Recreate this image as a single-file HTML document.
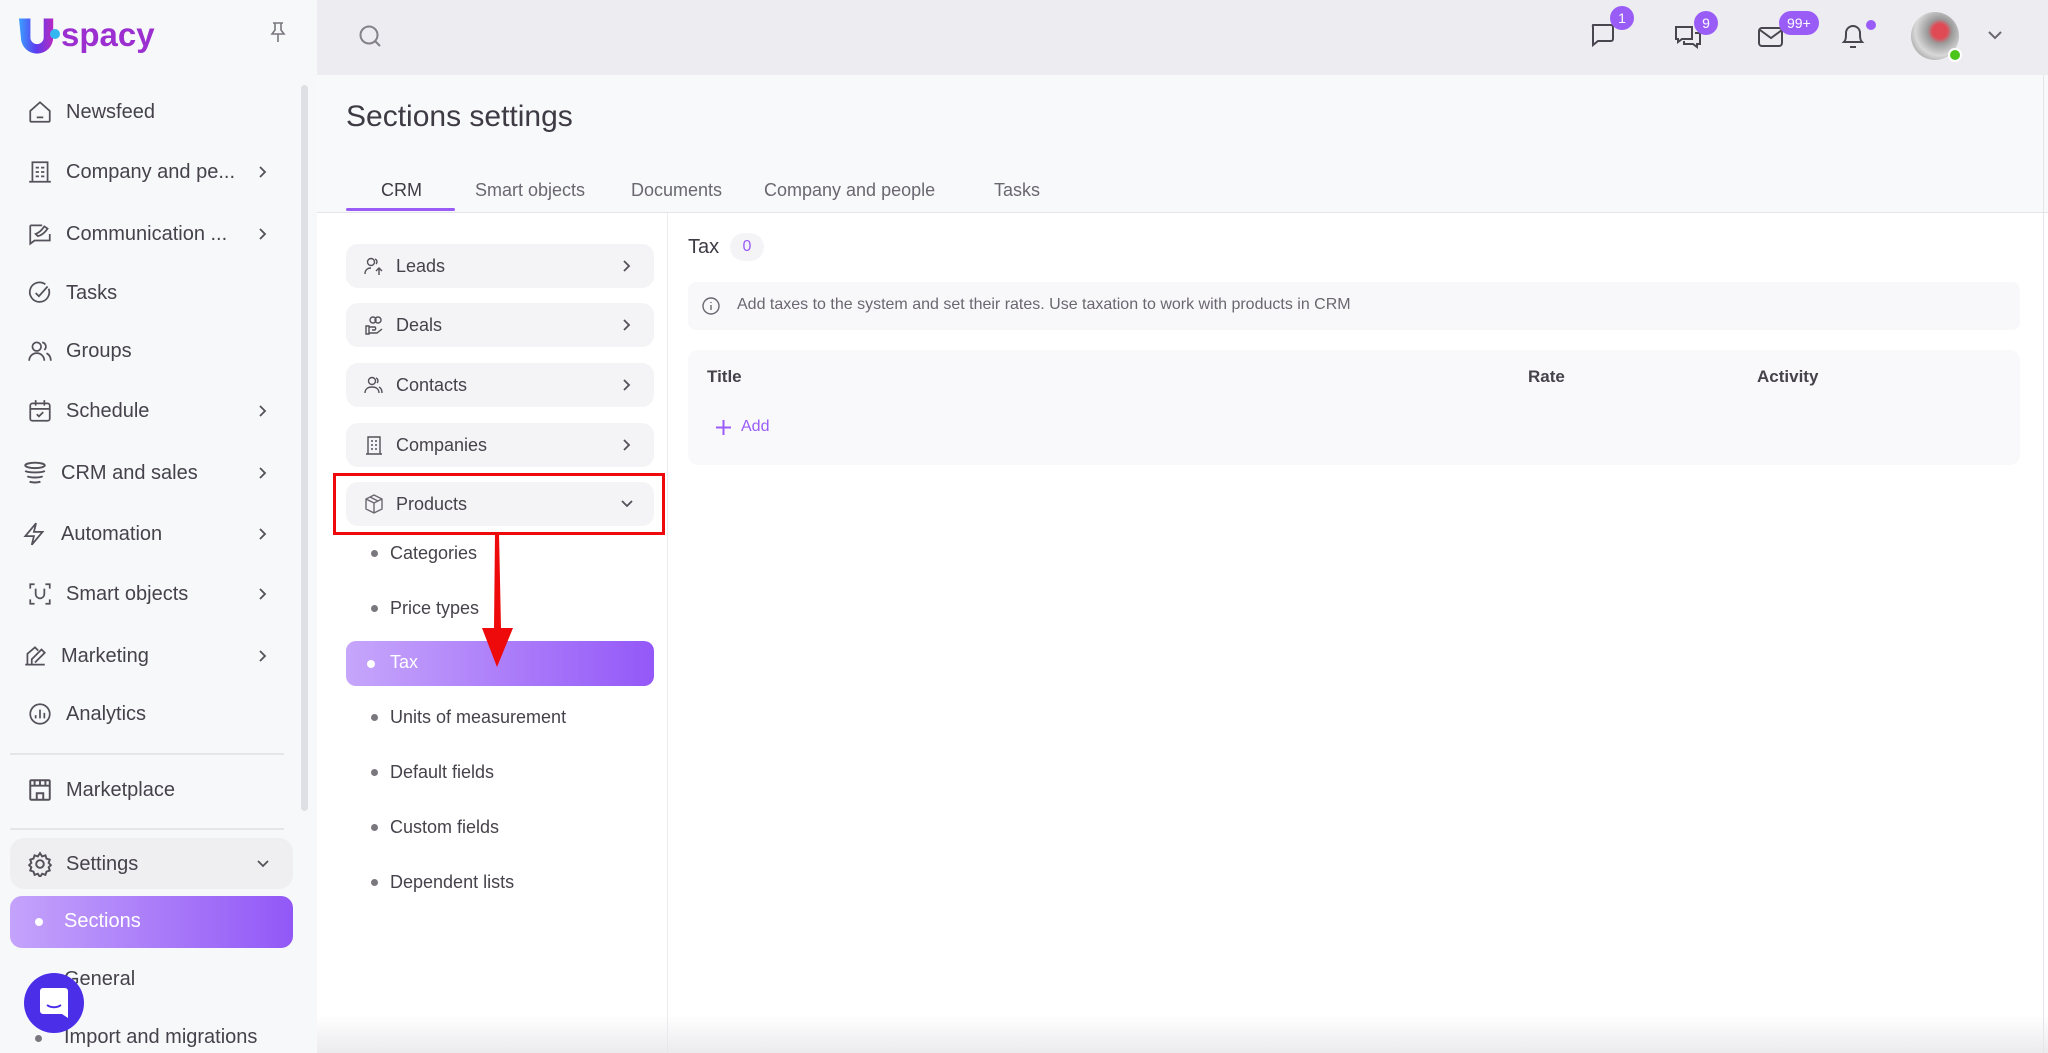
<!DOCTYPE html>
<html><head><meta charset="utf-8">
<style>
*{box-sizing:border-box;margin:0;padding:0}
body{width:2048px;height:1053px;overflow:hidden;background:#fff;font-family:"Liberation Sans",sans-serif;color:#3f3b45;position:relative}
.abs{position:absolute}
#side{left:0;top:0;width:317px;height:1053px;background:#f7f8fa}
.si{position:absolute;left:0;width:300px;height:40px;display:flex;align-items:center;font-size:20px;color:#46424b}
.si svg.ico{position:absolute;left:27px;width:26px;height:26px}
.si span{position:absolute;left:66px}
.si svg.chev{position:absolute;left:256px;width:14px;height:14px}
#top{left:317px;top:0;width:1731px;height:75px;background:#ececf1}
#main{left:317px;top:75px;width:1731px;height:138px;background:#f8f9fb}
.tab{position:absolute;top:180px;font-size:18px;color:#6b6770}
.lp{position:absolute;left:346px;width:308px;height:44px;background:#f4f4f6;border-radius:12px;font-size:18px;color:#46424b}
.lp svg.ic{position:absolute;left:18px;top:12px;width:20px;height:20px}
.lp span{position:absolute;left:50px;top:12px}
.lp svg.ch{position:absolute;right:20px;top:15px;width:14px;height:14px}
.sub{position:absolute;left:371px;font-size:18px;color:#46424b}
.sub:before{content:"";position:absolute;left:0;top:7px;width:7px;height:7px;border-radius:50%;background:#7b777f}
.sub span{margin-left:19px}
.bdg{position:absolute;background:#9a5cf7;color:#fff;font-size:14px;border-radius:12px;height:24px;min-width:24px;text-align:center;line-height:24px;padding:0 4px}
</style></head><body>
<div id="side" class="abs">
 <svg class="abs" style="left:19px;top:18px" width="38" height="37" viewBox="0 0 40 38"><defs><linearGradient id="lg" x1="0" x2="1"><stop offset="0" stop-color="#3aa0ff"/><stop offset=".5" stop-color="#5b3cf0"/><stop offset="1" stop-color="#b82ac0"/></linearGradient></defs><path d="M0 0h12v20a7 7 0 0 0 14 0V0h10v20a17 17 0 0 1-34 0z" fill="url(#lg)"/></svg>
 <div class="abs" style="left:50px;top:29px;width:10px;height:10px;border-radius:50%;background:#34b6f0"></div>
 <div class="abs" style="left:61px;top:16px;font-size:33px;font-weight:bold;color:#9b2fd0">spacy</div>
 <svg class="abs" style="left:268px;top:21px" width="20" height="22" viewBox="0 0 20 22" fill="none" stroke="#7a767e" stroke-width="1.6"><path d="M5 2h10M7 2v7l-3 4h12l-3-4V2M10 13v8"/></svg>
 <div class="abs" style="left:301px;top:85px;width:7px;height:726px;background:#dfe0e6;border-radius:4px"></div>

 <div class="si" style="top:92px"><svg class="ico" viewBox="0 0 24 24" fill="none" stroke="#55515a" stroke-width="1.6"><path d="M3 11l9-8 9 8v9a1 1 0 0 1-1 1H4a1 1 0 0 1-1-1z M9 17h6"/></svg><span>Newsfeed</span></div>
 <div class="si" style="top:152px"><svg class="ico" viewBox="0 0 24 24" fill="none" stroke="#55515a" stroke-width="1.6"><path d="M5 3h14v18H5zM2 21h20M8 8h3M13 8h3M8 12h3M13 12h3M8 16h3M13 16h3"/></svg><span>Company and pe...</span><svg class="chev" viewBox="0 0 14 14" fill="none" stroke="#55515a" stroke-width="1.8"><path d="M4 2l5 5-5 5"/></svg></div>
 <div class="si" style="top:214px"><svg class="ico" viewBox="0 0 24 24" fill="none" stroke="#55515a" stroke-width="1.6"><path d="M3 4h11M3 4v17l4-3h14v-6M8 12c3-1 6-4 8-7l3 2c-2 3-5 6-9 7z"/></svg><span>Communication ...</span><svg class="chev" viewBox="0 0 14 14" fill="none" stroke="#55515a" stroke-width="1.8"><path d="M4 2l5 5-5 5"/></svg></div>
 <div class="si" style="top:273px"><svg class="ico" viewBox="0 0 24 24" fill="none" stroke="#55515a" stroke-width="1.6"><path d="M20 8a9 9 0 1 1-3-4M8 12l3 3 8-9"/></svg><span>Tasks</span></div>
 <div class="si" style="top:331px"><svg class="ico" viewBox="0 0 24 24" fill="none" stroke="#55515a" stroke-width="1.6"><circle cx="9" cy="8" r="4"/><path d="M2 21c0-4 3-7 7-7s7 3 7 7M14 4a4 4 0 0 1 2 7M18 14c2 1 4 3 4 7"/></svg><span>Groups</span></div>
 <div class="si" style="top:391px"><svg class="ico" viewBox="0 0 24 24" fill="none" stroke="#55515a" stroke-width="1.6"><rect x="3" y="5" width="18" height="16" rx="2"/><path d="M3 10h18M8 2v5M16 2v5M9 15l2 2 4-4"/></svg><span>Schedule</span><svg class="chev" viewBox="0 0 14 14" fill="none" stroke="#55515a" stroke-width="1.8"><path d="M4 2l5 5-5 5"/></svg></div>
 <div class="si" style="top:453px"><svg class="ico" style="left:22px" viewBox="0 0 24 24" fill="none" stroke="#55515a" stroke-width="1.8"><ellipse cx="12" cy="5" rx="9" ry="2.5"/><path d="M3 10c2 2 16 2 18 0M5 15c2 1.5 12 1.5 14 0M7 20c2 1 8 1 10 0"/></svg><span style="left:61px">CRM and sales</span><svg class="chev" viewBox="0 0 14 14" fill="none" stroke="#55515a" stroke-width="1.8"><path d="M4 2l5 5-5 5"/></svg></div>
 <div class="si" style="top:514px"><svg class="ico" style="left:22px" viewBox="0 0 24 24" fill="none" stroke="#55515a" stroke-width="1.6"><path d="M13 2L3 14h8l-2 8 10-12h-8z"/></svg><span style="left:61px">Automation</span><svg class="chev" viewBox="0 0 14 14" fill="none" stroke="#55515a" stroke-width="1.8"><path d="M4 2l5 5-5 5"/></svg></div>
 <div class="si" style="top:574px"><svg class="ico" viewBox="0 0 24 24" fill="none" stroke="#55515a" stroke-width="1.6"><path d="M3 7V3h4M17 3h4v4M21 17v4h-4M7 21H3v-4M8 7v5a4 4 0 0 0 8 0V7"/></svg><span>Smart objects</span><svg class="chev" viewBox="0 0 14 14" fill="none" stroke="#55515a" stroke-width="1.8"><path d="M4 2l5 5-5 5"/></svg></div>
 <div class="si" style="top:636px"><svg class="ico" style="left:22px" viewBox="0 0 24 24" fill="none" stroke="#55515a" stroke-width="1.6"><path d="M3 20h18M5 20V10l7-6 3 3M9 20v-5l9-9 3 3-9 9"/></svg><span style="left:61px">Marketing</span><svg class="chev" viewBox="0 0 14 14" fill="none" stroke="#55515a" stroke-width="1.8"><path d="M4 2l5 5-5 5"/></svg></div>
 <div class="si" style="top:694px"><svg class="ico" viewBox="0 0 24 24" fill="none" stroke="#55515a" stroke-width="1.6"><circle cx="12" cy="12" r="9"/><path d="M8 16v-3M12 16V8M16 16v-5"/></svg><span>Analytics</span></div>
 <div class="abs" style="left:10px;top:753px;width:274px;height:2px;background:#e6e6ea"></div>
 <div class="si" style="top:770px"><svg class="ico" viewBox="0 0 24 24" fill="none" stroke="#55515a" stroke-width="1.8"><rect x="3" y="3" width="18" height="18" rx="1"/><path d="M3 8h18M7 3v5M12 3v5M17 3v5M9 21v-6h6v6"/></svg><span>Marketplace</span></div>
 <div class="abs" style="left:10px;top:828px;width:274px;height:2px;background:#e6e6ea"></div>
 <div class="abs" style="left:10px;top:838px;width:283px;height:51px;background:#efeff2;border-radius:14px"></div>
 <div class="si" style="top:844px"><svg class="ico" viewBox="0 0 24 24" fill="none" stroke="#55515a" stroke-width="1.8"><circle cx="12" cy="12" r="3.5"/><path d="M12 2l2 3 3-1 1 3 3 1-1 3 2 2-2 2 1 3-3 1-1 3-3-1-2 3-2-3-3 1-1-3-3-1 1-3-2-2 2-2-1-3 3-1 1-3 3 1z"/></svg><span>Settings</span><svg class="chev" viewBox="0 0 14 14" fill="none" stroke="#55515a" stroke-width="1.8"><path d="M2 4l5 5 5-5"/></svg></div>
 <div class="abs" style="left:10px;top:896px;width:283px;height:52px;border-radius:12px;background:linear-gradient(90deg,#c4a3fb,#9258f7)"></div>
 <div class="abs" style="left:35px;top:918px;width:8px;height:8px;border-radius:50%;background:#fff"></div>
 <div class="abs" style="left:64px;top:910px;font-size:20px;color:#fff">Sections</div>
 <div class="abs" style="left:64px;top:968px;font-size:20px;color:#46424b">General</div>
 <div class="abs" style="left:35px;top:1035px;width:7px;height:7px;border-radius:50%;background:#7b777f"></div>
 <div class="abs" style="left:64px;top:1026px;font-size:20px;color:#46424b">Import and migrations</div>
 <div class="abs" style="left:24px;top:973px;width:60px;height:60px;border-radius:50%;background:#4a2ee8"></div>
 <svg class="abs" style="left:40px;top:988px" width="28" height="30" viewBox="0 0 28 30"><path d="M3 0h22a3 3 0 0 1 3 3v27l-6-4H3a3 3 0 0 1-3-3V3a3 3 0 0 1 3-3z" fill="#fff"/><path d="M7 17c4 3 10 3 14 0" stroke="#4a2ee8" stroke-width="2" fill="none"/></svg>
</div>

<div id="top" class="abs"></div>
<svg class="abs" style="left:358px;top:24px" width="26" height="26" viewBox="0 0 26 26" fill="none" stroke="#858189" stroke-width="2"><circle cx="11" cy="11" r="8.5"/><path d="M17 17l5 5"/></svg>
<svg class="abs" style="left:1589px;top:22px" width="26" height="26" viewBox="0 0 26 26" fill="none" stroke="#4a464f" stroke-width="2"><path d="M4 3h18a2 2 0 0 1 2 2v12a2 2 0 0 1-2 2H9l-5 4V5a2 2 0 0 1 0-2z"/></svg>
<div class="bdg" style="left:1610px;top:6px">1</div>
<svg class="abs" style="left:1674px;top:24px" width="28" height="26" viewBox="0 0 28 26" fill="none" stroke="#4a464f" stroke-width="2"><path d="M2 3h16v12H8l-4 3V15H2zM10 17v3h9l4 3V20h3V9h-5"/></svg>
<div class="bdg" style="left:1694px;top:11px">9</div>
<svg class="abs" style="left:1758px;top:27px" width="26" height="20" viewBox="0 0 26 20" fill="none" stroke="#4a464f" stroke-width="2"><rect x="1" y="1" width="23" height="18" rx="3"/><path d="M2 3l11 8 11-8"/></svg>
<div class="bdg" style="left:1779px;top:11px;padding:0 8px">99+</div>
<svg class="abs" style="left:1840px;top:22px" width="26" height="28" viewBox="0 0 26 28" fill="none" stroke="#4a464f" stroke-width="2"><path d="M4 20c2-2 2-5 2-9a7 7 0 0 1 14 0c0 4 0 7 2 9zM10 25h6"/></svg>
<div class="abs" style="left:1866px;top:20px;width:10px;height:10px;border-radius:50%;background:#9a5cf7"></div>
<div class="abs" style="left:1911px;top:12px;width:48px;height:48px;border-radius:50%;background:radial-gradient(circle at 60% 40%,#e04a55 0 18%,#9a9a9a 30%,#d8d8d8 60%,#777 100%)"></div>
<div class="abs" style="left:1948px;top:48px;width:14px;height:14px;border-radius:50%;background:#4cc51a;border:2px solid #fff"></div>
<svg class="abs" style="left:1987px;top:29px" width="16" height="12" viewBox="0 0 16 12" fill="none" stroke="#6b6770" stroke-width="2"><path d="M2 3l6 6 6-6"/></svg>

<div id="main" class="abs"></div>
<div class="abs" style="left:346px;top:100px;font-size:30px;color:#3f3b45">Sections settings</div>
<div class="tab" style="left:381px;color:#3f3b45">CRM</div>
<div class="tab" style="left:475px">Smart objects</div>
<div class="tab" style="left:631px">Documents</div>
<div class="tab" style="left:764px">Company and people</div>
<div class="tab" style="left:994px">Tasks</div>
<div class="abs" style="left:317px;top:212px;width:1731px;height:1px;background:#e4e4ea"></div>
<div class="abs" style="left:346px;top:208px;width:109px;height:3px;background:#9a5cf7;border-radius:2px"></div>
<div class="abs" style="left:667px;top:213px;width:1px;height:840px;background:#ececf0"></div>
<div class="abs" style="left:2043px;top:75px;width:1px;height:978px;background:#e4e4ea"></div>

<div class="lp" style="top:244px"><svg class="ic" viewBox="0 0 20 20" fill="none" stroke="#55515a" stroke-width="1.4"><circle cx="7" cy="6" r="3.5"/><path d="M1 18c0-4 2.5-6 6-6M15 19v-6M12 15l3-3 3 3M11 3a3 3 0 0 1 1 5"/></svg><span>Leads</span><svg class="ch" viewBox="0 0 14 14" fill="none" stroke="#55515a" stroke-width="1.8"><path d="M4 2l5 5-5 5"/></svg></div>
<div class="lp" style="top:303px"><svg class="ic" viewBox="0 0 20 20" fill="none" stroke="#55515a" stroke-width="1.4"><circle cx="9" cy="5" r="3"/><circle cx="14" cy="5" r="3"/><path d="M2 11h3v8H2zM5 12h6a2 2 0 0 1 0 3H8M5 18h8l5-4"/></svg><span>Deals</span><svg class="ch" viewBox="0 0 14 14" fill="none" stroke="#55515a" stroke-width="1.8"><path d="M4 2l5 5-5 5"/></svg></div>
<div class="lp" style="top:363px"><svg class="ic" viewBox="0 0 20 20" fill="none" stroke="#55515a" stroke-width="1.4"><circle cx="8" cy="6" r="3.5"/><path d="M1 18c0-4 3-6 7-6s7 2 7 6M12 3a3 3 0 0 1 1 5M15 12c2 1 3 3 3 6"/></svg><span>Contacts</span><svg class="ch" viewBox="0 0 14 14" fill="none" stroke="#55515a" stroke-width="1.8"><path d="M4 2l5 5-5 5"/></svg></div>
<div class="lp" style="top:423px"><svg class="ic" viewBox="0 0 20 20" fill="none" stroke="#55515a" stroke-width="1.4"><path d="M4 2h12v17H4zM2 19h16M7 6h2M11 6h2M7 10h2M11 10h2M7 14h2M11 14h2"/></svg><span>Companies</span><svg class="ch" viewBox="0 0 14 14" fill="none" stroke="#55515a" stroke-width="1.8"><path d="M4 2l5 5-5 5"/></svg></div>
<div class="lp" style="top:482px"><svg class="ic" viewBox="0 0 20 20" fill="none" stroke="#6b6770" stroke-width="1.4"><path d="M10 1l8 4v10l-8 4-8-4V5zM2 5l8 4 8-4M10 9v10M6 3l8 4"/></svg><span>Products</span><svg class="ch" viewBox="0 0 14 14" fill="none" stroke="#55515a" stroke-width="1.8"><path d="M2 4l5 5 5-5"/></svg></div>
<div class="abs" style="left:333px;top:473px;width:332px;height:62px;border:3px solid #ee0a0a"></div>

<div class="sub" style="top:543px"><span>Categories</span></div>
<div class="sub" style="top:598px"><span>Price types</span></div>
<div class="abs" style="left:346px;top:641px;width:308px;height:45px;border-radius:10px;background:linear-gradient(90deg,#c6a6fb,#9458f8)"></div>
<div class="abs" style="left:367px;top:660px;width:8px;height:8px;border-radius:50%;background:#fff"></div>
<div class="abs" style="left:390px;top:652px;font-size:18px;color:#fff">Tax</div>
<div class="sub" style="top:707px"><span>Units of measurement</span></div>
<div class="sub" style="top:762px"><span>Default fields</span></div>
<div class="sub" style="top:817px"><span>Custom fields</span></div>
<div class="sub" style="top:872px"><span>Dependent lists</span></div>

<svg class="abs" style="left:480px;top:533px" width="36" height="135" viewBox="0 0 36 135"><path d="M15 0h4l2 95h12L17 134 2 95h12z" fill="#ee0a0a"/></svg>

<div class="abs" style="left:688px;top:236px;font-size:20px;color:#3f3b45">Tax</div>
<div class="abs" style="left:730px;top:233px;width:34px;height:28px;border-radius:14px;background:#f4f4f6;color:#9a5cf7;font-size:16px;text-align:center;line-height:28px">0</div>
<div class="abs" style="left:688px;top:282px;width:1332px;height:48px;background:#f8f8fb;border-radius:8px"></div>
<svg class="abs" style="left:702px;top:297px" width="18" height="18" viewBox="0 0 18 18" fill="none" stroke="#6b6770" stroke-width="1.4"><circle cx="9" cy="9" r="8"/><path d="M9 8v5M9 5v1"/></svg>
<div class="abs" style="left:737px;top:296px;font-size:16px;color:#6b6770">Add taxes to the system and set their rates. Use taxation to work with products in CRM</div>
<div class="abs" style="left:688px;top:350px;width:1332px;height:115px;background:#f9f9fb;border-radius:10px"></div>
<div class="abs" style="left:707px;top:367px;font-size:17px;font-weight:bold;color:#46424b">Title</div>
<div class="abs" style="left:1528px;top:367px;font-size:17px;font-weight:bold;color:#46424b">Rate</div>
<div class="abs" style="left:1757px;top:367px;font-size:17px;font-weight:bold;color:#46424b">Activity</div>
<svg class="abs" style="left:716px;top:420px" width="15" height="15" viewBox="0 0 15 15" stroke="#9a5cf7" stroke-width="2"><path d="M7.5 0v15M0 7.5h15"/></svg>
<div class="abs" style="left:741px;top:418px;font-size:16px;color:#9a5cf7">Add</div>
<div class="abs" style="left:317px;top:1015px;width:1731px;height:38px;background:linear-gradient(180deg,rgba(255,255,255,0),rgba(230,230,234,.8))"></div>
</body></html>
